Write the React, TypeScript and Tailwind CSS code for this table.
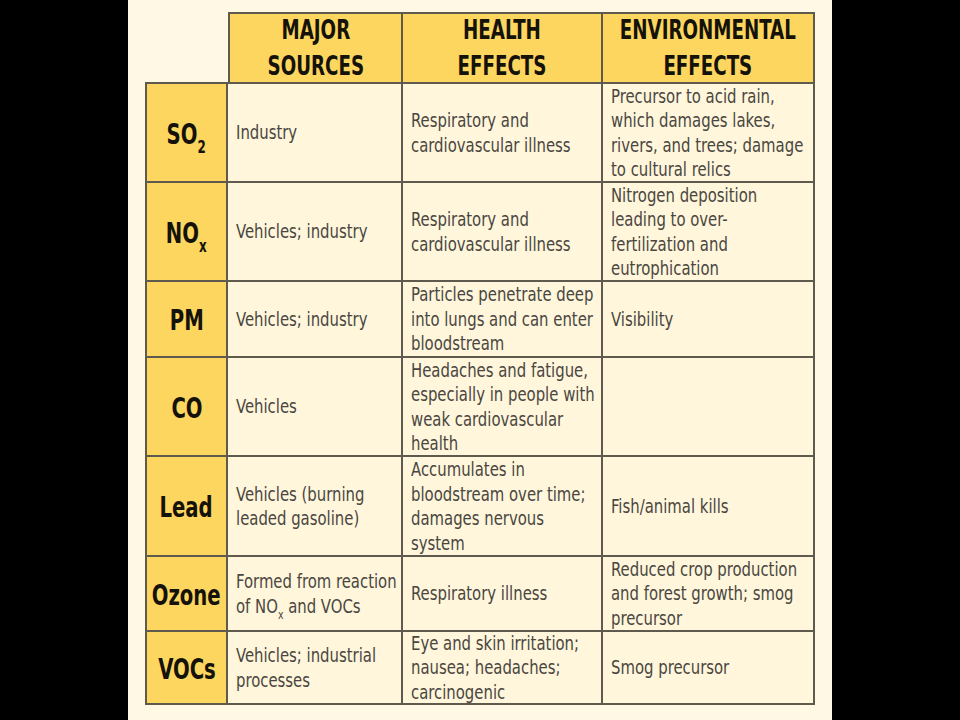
import React from 'react'

type Row = {
  label: React.ReactNode
  sources: React.ReactNode[]
  health: string[]
  env: string[]
}

const rows: Row[] = [
  {
    label: (
      <>
        SO<sub className="text-[17px] align-[-5px]">2</sub>
      </>
    ),
    sources: ['Industry'],
    health: ['Respiratory and', 'cardiovascular illness'],
    env: ['Precursor to acid rain,', 'which damages lakes,', 'rivers, and trees; damage', 'to cultural relics'],
  },
  {
    label: (
      <>
        NO<sub className="text-[17px] align-[-5px]">x</sub>
      </>
    ),
    sources: ['Vehicles; industry'],
    health: ['Respiratory and', 'cardiovascular illness'],
    env: ['Nitrogen deposition', 'leading to over-', 'fertilization and', 'eutrophication'],
  },
  {
    label: 'PM',
    sources: ['Vehicles; industry'],
    health: ['Particles penetrate deep', 'into lungs and can enter', 'bloodstream'],
    env: ['Visibility'],
  },
  {
    label: 'CO',
    sources: ['Vehicles'],
    health: ['Headaches and fatigue,', 'especially in people with', 'weak cardiovascular', 'health'],
    env: [],
  },
  {
    label: 'Lead',
    sources: ['Vehicles (burning', 'leaded gasoline)'],
    health: ['Accumulates in', 'bloodstream over time;', 'damages nervous', 'system'],
    env: ['Fish/animal kills'],
  },
  {
    label: 'Ozone',
    sources: [
      'Formed from reaction',
      <>
        of NO<sub className="text-[12px] align-[-3px]">x</sub> and VOCs
      </>,
    ],
    health: ['Respiratory illness'],
    env: ['Reduced crop production', 'and forest growth; smog', 'precursor'],
  },
  {
    label: 'VOCs',
    sources: ['Vehicles; industrial', 'processes'],
    health: ['Eye and skin irritation;', 'nausea; headaches;', 'carcinogenic'],
    env: ['Smog precursor'],
  },
]

const line = 'border-[#5f5a4e]'

// lines are broken by hand, as in the printed table
function Cell({lines}: {lines: React.ReactNode[]}) {
  return (
    <div className={`${line} border-r-2 border-b-2 bg-[#fff6dc] flex items-center pl-2 overflow-hidden`}>
      <div className="scale-x-[0.87] origin-left whitespace-nowrap text-[19px] leading-[24.5px] text-[#4a463f]">
        {lines.map((l, i) => (
          <div key={i}>{l}</div>
        ))}
      </div>
    </div>
  )
}

function App() {
  return (
    <div className="min-h-screen bg-black" style={{fontFamily: '"DejaVu Sans Condensed", "DejaVu Sans", sans-serif'}}>
      <div className="mx-auto w-[704px] h-[720px] bg-[#fff8e4] pl-[17px] pt-[12px]">
        <div className="grid grid-cols-[83px_175px_200px_212px] grid-rows-[72px_99px_99px_76px_99px_100px_75px_73px]">
          <div className={`${line} border-b-2`} />
          {[
            ['MAJOR', 'SOURCES'],
            ['HEALTH', 'EFFECTS'],
            ['ENVIRONMENTAL', 'EFFECTS'],
          ].map((t, i) => (
            <div
              key={t[0]}
              className={`${line} border-t-2 border-r-2 border-b-2 ${i === 0 ? 'border-l-2' : ''} bg-[#fdd660] flex items-center justify-center`}
            >
              <div className="scale-x-[0.78] flex flex-col items-center font-bold text-[26px] leading-[36px] text-[#141209] whitespace-nowrap">
                <div>{t[0]}</div>
                <div>{t[1]}</div>
              </div>
            </div>
          ))}
          {rows.map((r, i) => (
            <React.Fragment key={i}>
              <div className={`${line} border-l-2 border-r-2 border-b-2 bg-[#fdd660] flex items-center justify-center pt-1`}>
                <span className="scale-x-[0.78] font-bold text-[28px] text-[#141209] whitespace-nowrap">{r.label}</span>
              </div>
              <Cell lines={r.sources} />
              <Cell lines={r.health} />
              <Cell lines={r.env} />
            </React.Fragment>
          ))}
        </div>
      </div>
    </div>
  )
}

export default App
